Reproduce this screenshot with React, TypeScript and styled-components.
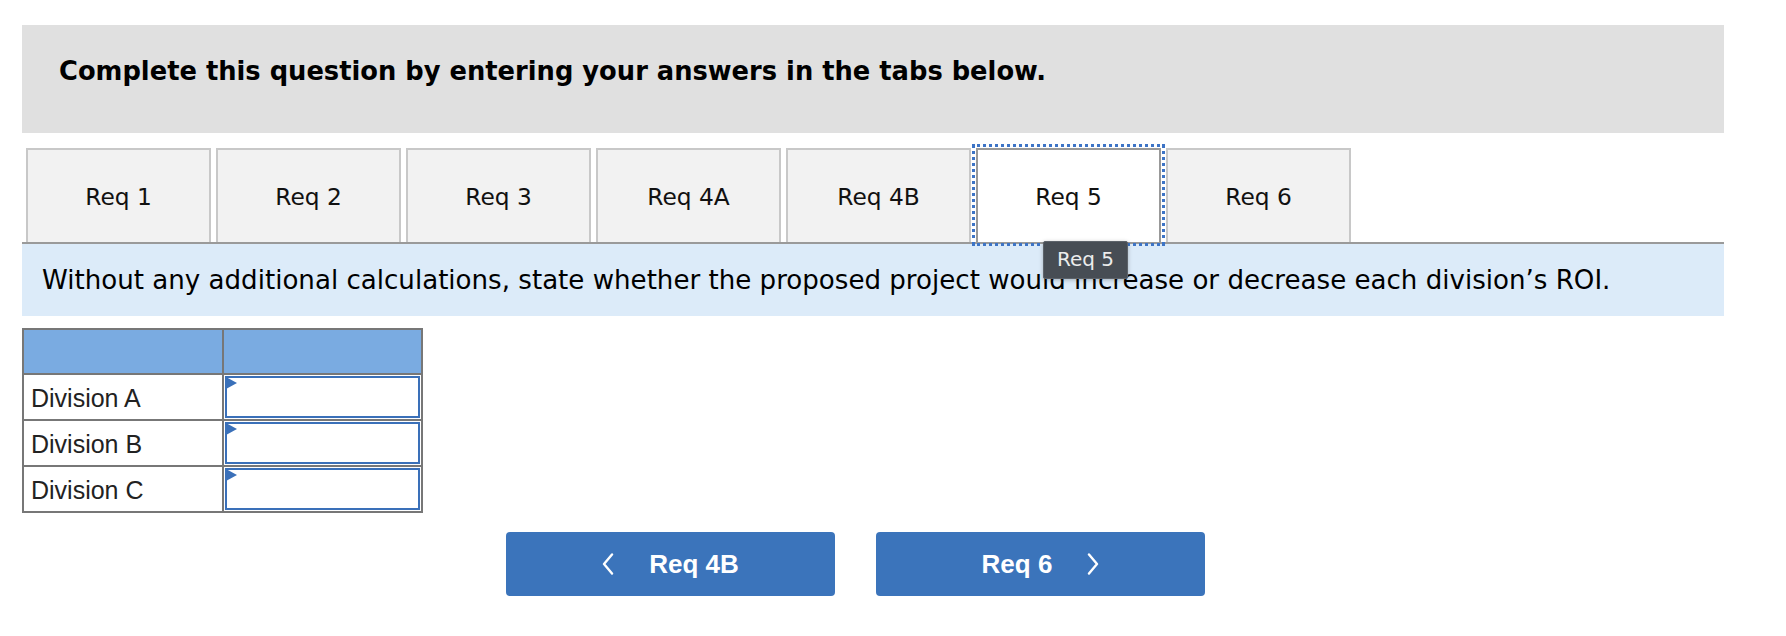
import React from 'react';
import styled, { createGlobalStyle, css } from 'styled-components';

const GlobalStyle = createGlobalStyle`
  html, body {
    margin: 0;
    padding: 0;
    background: #fff;
  }

  body {
    font-family: 'DejaVu Sans', Verdana, sans-serif;
    color: #000;
  }
`;

const tabs = ['Req 1', 'Req 2', 'Req 3', 'Req 4A', 'Req 4B', 'Req 5', 'Req 6'];
const activeTab = 'Req 5';
const divisions = ['Division A', 'Division B', 'Division C'];

const Chevron = ({ dir }: { dir: 'left' | 'right' }) => (
  <svg width="12" height="22" viewBox="0 0 12 22" aria-hidden="true">
    <polyline
      points={dir === 'left' ? '10,1.5 2,11 10,20.5' : '2,1.5 10,11 2,20.5'}
      fill="none"
      stroke="#fff"
      strokeWidth="2.4"
      strokeLinecap="round"
      strokeLinejoin="round"
    />
  </svg>
);

export default function App() {
  return (
    <>
      <GlobalStyle />
      <Page>
        <Banner>
          <Title>Complete this question by entering your answers in the tabs below.</Title>
        </Banner>

        <TabStrip>
          {tabs.map((tab) => (
            <Tab key={tab} active={tab === activeTab}>
              {tab}
              {tab === activeTab && <Tooltip>{tab}</Tooltip>}
            </Tab>
          ))}
        </TabStrip>

        <Prompt>
          Without any additional calculations, state whether the proposed project would increase or
          decrease each division’s ROI.
        </Prompt>

        <AnswerTable>
          <tbody>
            <HeadRow>
              <HeadCell />
              <HeadCell />
            </HeadRow>
            {divisions.map((name) => (
              <BodyRow key={name}>
                <LabelCell>{name}</LabelCell>
                <InputCell>
                  <AnswerInput type="text" aria-label={name} />
                  <Flag />
                </InputCell>
              </BodyRow>
            ))}
          </tbody>
        </AnswerTable>

        <Nav>
          <NavButton>
            <Chevron dir="left" />
            <span>Req 4B</span>
          </NavButton>
          <NavButton>
            <span>Req 6</span>
            <Chevron dir="right" />
          </NavButton>
        </Nav>
      </Page>
    </>
  );
}

const Page = styled.div`
  width: 1702px;
  padding: 25px 0 0 22px;
`;

const Banner = styled.div`
  box-sizing: border-box;
  height: 108px;
  padding: 31px 37px 0;
  background: #e0e0e0;
`;

const Title = styled.h1`
  margin: 0;
  font-size: 25.75px;
  line-height: 30px;
  font-weight: 700;
  color: #000;
`;

const TabStrip = styled.div`
  display: flex;
  gap: 5px;
  margin-top: 15px;
  padding-left: 4px;
  border-bottom: 2px solid #9a9a9a;
`;

interface TabProps {
  active?: boolean;
}

const Tab = styled.div<TabProps>`
  position: relative;
  box-sizing: border-box;
  display: flex;
  align-items: center;
  justify-content: center;
  width: 185px;
  height: 94px;
  border: 2px solid #c8c8c8;
  border-bottom: 0;
  background: #f2f2f2;
  font-size: 23.3px;
  color: #111;

  ${({ active }) =>
    active &&
    css`
      background: #fff;
      border-color: #999;
      outline: 3px dotted #3d74c6;
      outline-offset: 1px;
    `}
`;

const Tooltip = styled.div`
  position: absolute;
  left: 65px;
  top: 91px;
  z-index: 2;
  padding: 6px 13px 7px;
  background: #474d54;
  border: 1px solid #5d636a;
  border-radius: 2px;
  box-shadow: 0 1px 4px rgba(0, 0, 0, 0.25);
  color: #ececec;
  font-size: 20px;
  line-height: 23px;
  white-space: nowrap;
`;

const Prompt = styled.div`
  box-sizing: border-box;
  display: flex;
  align-items: center;
  height: 72px;
  padding-left: 20px;
  background: #dcebf9;
  font-size: 26.1px;
  color: #000;
`;

const AnswerTable = styled.table`
  margin-top: 12px;
  width: 401px;
  border-collapse: collapse;
  font-family: 'Liberation Sans', Arial, sans-serif;

  td {
    border: 2px solid #777;
    padding: 0;
  }
`;

const HeadRow = styled.tr`
  height: 45px;
`;

const HeadCell = styled.td`
  background: #7aabe1;

  &:first-child {
    width: 198px;
  }
`;

const BodyRow = styled.tr`
  height: 45px;
`;

const LabelCell = styled.td`
  padding: 2px 0 0 7px !important;
  font-size: 25px;
  color: #222;
  vertical-align: middle;
`;

const InputCell = styled.td`
  position: relative;
  padding: 1px 1px !important;
`;

const AnswerInput = styled.input`
  display: block;
  box-sizing: border-box;
  width: 100%;
  height: 42px;
  margin: 0;
  border: 2px solid #3a70b9;
  background: #fff;
  outline: none;
`;

const Flag = styled.span`
  position: absolute;
  top: 2px;
  left: 2px;
  width: 0;
  height: 0;
  border-left: 11px solid #3a70b9;
  border-top: 6.5px solid transparent;
  border-bottom: 6.5px solid transparent;
`;

const Nav = styled.div`
  display: flex;
  gap: 41px;
  margin-top: 19px;
  padding-left: 484px;
`;

const NavButton = styled.button`
  display: flex;
  align-items: center;
  justify-content: center;
  gap: 35px;
  width: 329px;
  height: 64px;
  padding: 0;
  border: 0;
  border-radius: 4px;
  background: #3b74bb;
  color: #fff;
  font-family: 'Liberation Sans', Arial, sans-serif;
  font-size: 26px;
  font-weight: 700;
  cursor: pointer;
`;
